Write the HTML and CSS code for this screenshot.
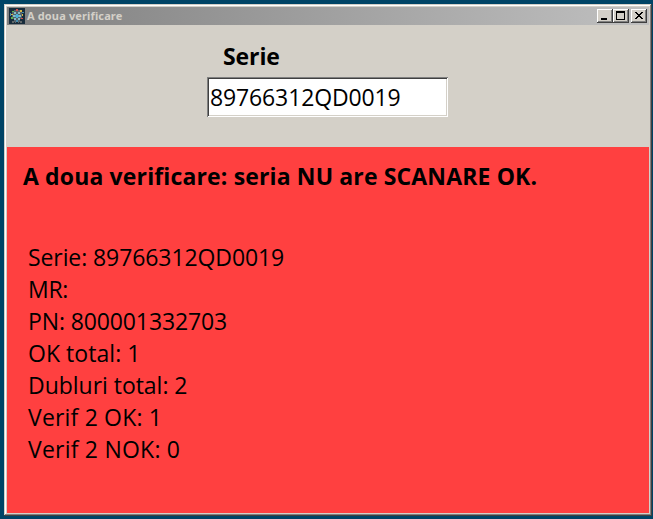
FILE: index.html
```
<!DOCTYPE html>
<html lang="ro">
<head>
<meta charset="utf-8">
<title>A doua verificare</title>
<link rel="stylesheet" href="styles.css">
</head>
<body>
<main class="window">
  <header class="titlebar">
    <svg class="app-icon" viewBox="0 0 16 16" shape-rendering="crispEdges">
      <path fill="#182c3c" d="M0 0h16v16H0z"/>
      <path fill="#53616a" d="M5 2h6v2h2v7h-2v3H5v-3H3V4h2z"/>
      <path fill="#83bac5" d="M5 4h2v2H5zM9 4h2v2H9zM4 7h2v2H4zM10 7h2v2h-2zM5 10h2v2H5zM9 10h2v2H9z"/>
      <path fill="#4dafd5" d="M7 6h2v1h1v2H9v1H7V9H6V7h1z"/>
      <path fill="#d34c48" d="M7 1h2v2H7zM12 10h2v1h-2z"/>
      <path fill="#5eb44f" d="M3 3h2v1H3zM2 9h2v2H2z"/>
      <path fill="#d2b64b" d="M11 2h2v2h-2zM2 6h2v1H2zM13 6h1v2h-1z"/>
      <path fill="#438bad" d="M1 5h1v3H1zM7 12h2v2H7zM13 4h2v1h-2z"/>
      <path fill="#606668" d="M3 13h2v2H3zM6 14h1v1H6zM9 14h1v1H9zM11 13h2v2h-2z"/>
    </svg>
    <h1 class="title">A doua verificare</h1>
    <div class="controls">
      <button class="control" aria-label="Minimize"><svg viewBox="0 0 12 10" shape-rendering="crispEdges"><path d="M2 7h6v2H2z"/></svg></button>
      <button class="control" aria-label="Maximize"><svg viewBox="0 0 12 10" shape-rendering="crispEdges"><path fill-rule="evenodd" d="M1 0h9v9H1zM2 2v6h7V2z"/></svg></button>
      <button class="control close" aria-label="Close"><svg viewBox="0 0 12 10" shape-rendering="crispEdges"><path d="M2 1h2v1h1v1h2V2h1V1h2v1H9v1H8v1H7v1h1v1h1v1h1v1H8V7H7V6H5v1H4v1H2V7h1V6h1V5h1V4H4V3H3V2H2z"/></svg></button>
    </div>
  </header>
  <section class="entry">
    <label class="entry-label" for="serial">Serie</label>
    <input class="serial" id="serial" type="text" value="89766312QD0019">
  </section>
  <section class="result">
    <h2 class="message">A doua verificare: seria NU are SCANARE OK.</h2>
    <div class="details">
      <p class="line-serial">Serie: 89766312QD0019</p>
      <p class="line-mr">MR:</p>
      <p class="line-pn">PN: 800001332703</p>
      <p class="line-ok">OK total: 1</p>
      <p class="line-dup">Dubluri total: 2</p>
      <p class="line-v2ok">Verif 2 OK: 1</p>
      <p class="line-v2nok">Verif 2 NOK: 0</p>
    </div>
  </section>
</main>
</body>
</html>
```
FILE: styles.css
```
* { box-sizing: border-box; margin: 0; padding: 0; }
body {
  width: 653px;
  height: 519px;
  padding: 4px 1px 3px 4px;
  overflow: hidden;
  background: #004466;
  color: #000;
  font-family: "Open Sans", "Noto Sans", sans-serif;
}
.window {
  display: flex;
  flex-direction: column;
  height: 512px;
  padding: 3px;
  background: #d4d0c8;
  box-shadow: inset -1px -1px #404040, inset 1px 1px #d4d0c8, inset -2px -2px #808080, inset 2px 2px #fff;
}
.titlebar {
  display: flex;
  align-items: center;
  height: 18px;
  padding: 0 2px;
  background: linear-gradient(to right, #808080, #c0c0c0);
}
.app-icon { width: 16px; height: 16px; }
.title {
  margin-left: 2px;
  color: #d4d0c8;
  font: bold 11px/16px "Noto Sans", sans-serif;
  letter-spacing: 0.14px;
  white-space: nowrap;
}
.controls { display: flex; margin-left: auto; }
.control {
  display: block;
  width: 16px;
  height: 14px;
  padding: 2px;
  border: 0;
  background: #d4d0c8;
  box-shadow: inset -1px -1px #404040, inset 1px 1px #fff, inset -2px -2px #808080;
}
.control svg { display: block; width: 12px; height: 10px; }
.close { margin-left: 2px; }
.entry {
  display: flex;
  flex-direction: column;
  height: 122px;
  padding: 15px 0 0 200px;
}
.entry-label {
  margin-left: 16px;
  font-size: 23px;
  font-weight: bold;
  line-height: 32px;
  letter-spacing: -0.1px;
}
.serial {
  width: 241px;
  height: 40px;
  margin-top: 5px;
  padding: 0 3px;
  border: 0;
  background: #fff;
  box-shadow: inset 1px 1px #808080, inset -1px -1px #fff, inset 2px 2px #404040, inset -2px -2px #d4d0c8;
  color: #000;
  font: 23px/32px "Open Sans", sans-serif;
  letter-spacing: -0.13px;
}
.result {
  flex: 1;
  padding: 13px 16px 0;
  background: #ff4040;
}
.message {
  font-size: 23px;
  line-height: 32px;
  letter-spacing: 0.14px;
  white-space: nowrap;
}
.details {
  margin: 49px 0 0 5px;
  font-size: 23px;
  line-height: 32px;
  white-space: nowrap;
}
.line-serial { letter-spacing: -0.09px; }
.line-mr { letter-spacing: -0.3px; }
.line-pn { letter-spacing: -0.12px; }
.line-ok { letter-spacing: 0.05px; }
.line-dup { letter-spacing: -0.03px; }
.line-v2ok { letter-spacing: 0.18px; }
.line-v2nok { letter-spacing: 0.22px; }
```
